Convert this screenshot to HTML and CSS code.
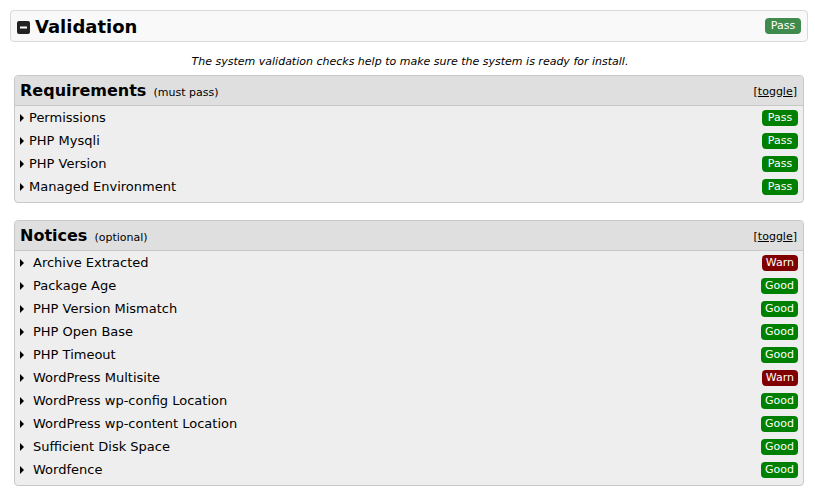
FILE: index.html
```html
<!DOCTYPE html>
<html>
<head>
<meta charset="utf-8">
<link rel="stylesheet" href="styles.css">
</head>
<body>
<div class="hdr">
  <div class="hdr-title">
    <svg class="minus" width="13" height="13" viewBox="0 0 13 13"><rect x="0" y="0" width="13" height="13" rx="2" fill="#222"/><rect x="3" y="5.5" width="7" height="2" fill="#fff"/></svg>
    <span>Validation</span>
  </div>
  <span class="badge pass-top">Pass</span>
</div>
<div class="intro">The system validation checks help to make sure the system is ready for install.</div>

<div class="box">
  <div class="box-hdr">
    <div><span class="box-title">Requirements</span> <span class="box-sub">(must pass)</span></div>
    <span class="toggle">[<u>toggle</u>]</span>
  </div>
  <div class="box-body">
    <div class="row"><span class="lbl req"><i class="tri"></i>Permissions</span><span class="badge good">Pass</span></div>
    <div class="row"><span class="lbl req"><i class="tri"></i>PHP Mysqli</span><span class="badge good">Pass</span></div>
    <div class="row"><span class="lbl req"><i class="tri"></i>PHP Version</span><span class="badge good">Pass</span></div>
    <div class="row"><span class="lbl req"><i class="tri"></i>Managed Environment</span><span class="badge good">Pass</span></div>
  </div>
</div>

<div class="box">
  <div class="box-hdr">
    <div><span class="box-title">Notices</span> <span class="box-sub">(optional)</span></div>
    <span class="toggle">[<u>toggle</u>]</span>
  </div>
  <div class="box-body">
    <div class="row"><span class="lbl"><i class="tri"></i>Archive Extracted</span><span class="badge warn">Warn</span></div>
    <div class="row"><span class="lbl"><i class="tri"></i>Package Age</span><span class="badge good">Good</span></div>
    <div class="row"><span class="lbl"><i class="tri"></i>PHP Version Mismatch</span><span class="badge good">Good</span></div>
    <div class="row"><span class="lbl"><i class="tri"></i>PHP Open Base</span><span class="badge good">Good</span></div>
    <div class="row"><span class="lbl"><i class="tri"></i>PHP Timeout</span><span class="badge good">Good</span></div>
    <div class="row"><span class="lbl"><i class="tri"></i>WordPress Multisite</span><span class="badge warn">Warn</span></div>
    <div class="row"><span class="lbl"><i class="tri"></i>WordPress wp-config Location</span><span class="badge good">Good</span></div>
    <div class="row"><span class="lbl"><i class="tri"></i>WordPress wp-content Location</span><span class="badge good">Good</span></div>
    <div class="row"><span class="lbl"><i class="tri"></i>Sufficient Disk Space</span><span class="badge good">Good</span></div>
    <div class="row"><span class="lbl"><i class="tri"></i>Wordfence</span><span class="badge good">Good</span></div>
  </div>
</div>
</body>
</html>
```

FILE: styles.css
```css
html, body {
  margin: 0;
  padding: 0;
  background: #fff;
}
body {
  font-family: "DejaVu Sans", Verdana, sans-serif;
  color: #000;
  padding: 10px 7px 0 10px;
}
.hdr {
  height: 30px;
  border: 1px solid #d9d9d9;
  border-radius: 4px;
  background: #f9f9f9;
  display: flex;
  align-items: center;
  justify-content: space-between;
  padding: 0 6px 0 6px;
}
.hdr-title {
  display: flex;
  align-items: center;
  gap: 5px;
  font-size: 18px;
  font-weight: bold;
  color: #000;
}
.minus {
  display: block;
  margin-top: 2px;
}
.intro {
  text-align: center;
  font-size: 11px;
  font-style: italic;
  margin: 13px 0 6px 0;
  height: 14px;
  line-height: 14px;
  padding-left: 2px;
}
.box {
  margin: 0 4px 17px 4px;
  border: 1px solid #c8c8c8;
  border-radius: 4px;
  background: #eee;
}
.box-hdr {
  height: 29px;
  background: #dfdfdf;
  border-bottom: 1px solid #c8c8c8;
  border-radius: 4px 4px 0 0;
  display: flex;
  align-items: center;
  justify-content: space-between;
  padding: 0 6px 0 5px;
}
.box-title {
  font-size: 16px;
  font-weight: bold;
}
.box-sub {
  font-size: 11px;
  margin-left: 2px;
}
.toggle {
  font-size: 11px;
  color: #000;
  margin-top: 1px;
}
.box-body {
  padding: 0 5px 4px 4px;
}
.row {
  height: 23px;
  display: flex;
  align-items: center;
  justify-content: space-between;
}
.lbl {
  font-size: 13px;
  display: flex;
  align-items: center;
  color: #000;
}
.tri {
  display: inline-block;
  width: 0;
  height: 0;
  border-top: 4px solid transparent;
  border-bottom: 4px solid transparent;
  border-left: 4px solid #000;
  margin: 0 9px 0 1px;
}
.lbl.req .tri {
  margin-right: 5px;
}
.badge {
  display: inline-block;
  height: 16px;
  line-height: 16px;
  padding: 0 4px;
  border-radius: 4px;
  font-size: 11px;
  color: #fff;
  min-width: 28px;
  text-align: center;
}
.good {
  background: #008000;
}
.warn {
  background: #800000;
}
.pass-top {
  background: #3f8a4d;
}
```
